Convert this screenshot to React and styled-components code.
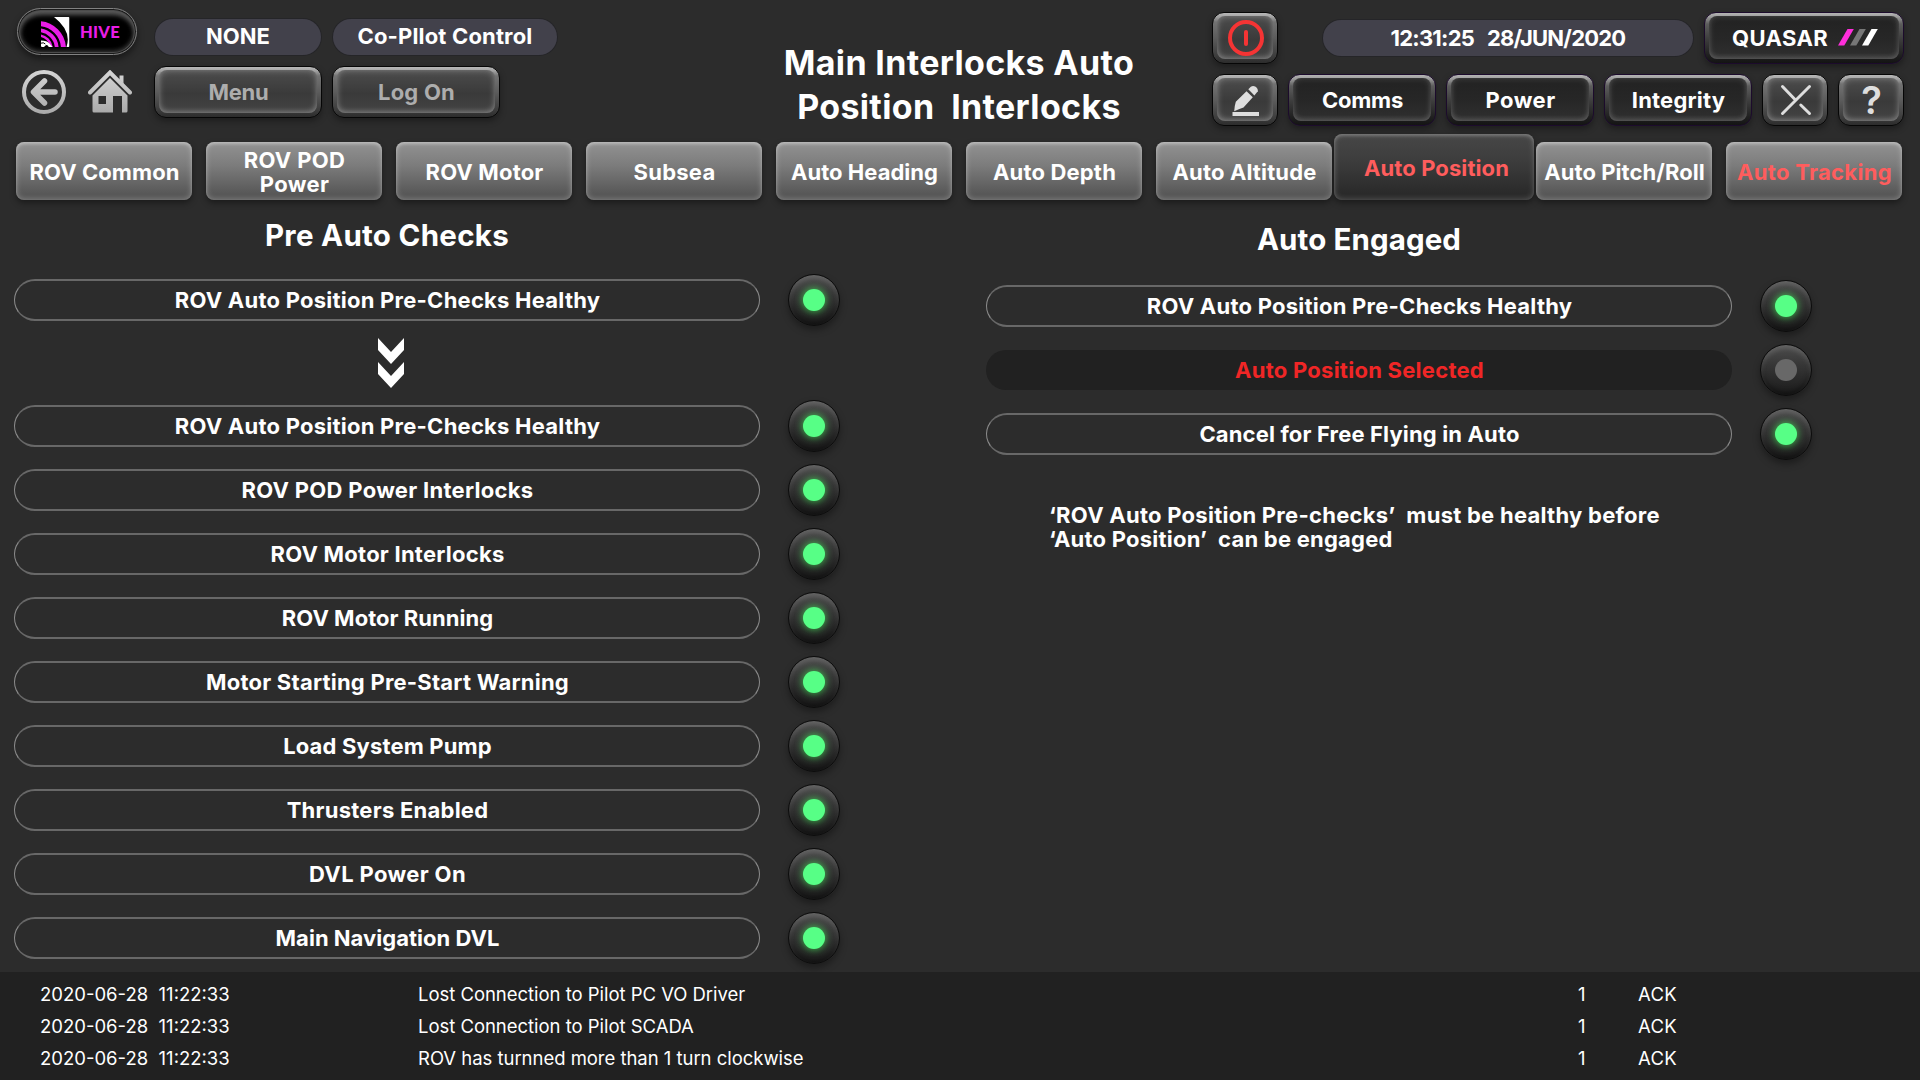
import React from 'react';
import styled, { createGlobalStyle, css } from 'styled-components';

const Global = createGlobalStyle`
  *, *::before, *::after { box-sizing: border-box; }
  body {
    margin: 0;
    background: #2c2c2c;
    color: #fff;
    font-family: Inter, "Liberation Sans", sans-serif;
    font-size: 22px;
    font-weight: 700;
    line-height: 24px;
  }
  svg { display: block; flex: none; }
`;

const Screen = styled.div`
  width: 1920px;
  height: 1080px;
  display: flex;
  flex-direction: column;
  overflow: hidden;
  background: #2c2c2c;
`;

const Label = styled.span`
  letter-spacing: ${p => p.$track || 0}px;
  word-spacing: ${p => p.$words || 0}px;
  white-space: pre;
  text-align: center;
`;

/* ---------- header ---------- */

const Header = styled.header`
  height: 134px;
  flex: none;
  display: flex;
`;

const HeaderLeft = styled.div`
  width: 704px;
  padding: 8px 0 0 17px;
  display: flex;
  flex-direction: column;
  gap: 11px;
`;

const HeaderRight = styled.div`
  padding-top: 12px;
  display: flex;
  flex-direction: column;
  gap: 10px;
`;

const Row = styled.div`
  display: flex;
  align-items: ${p => p.$align || 'center'};
  gap: ${p => p.$gap || 0}px;
`;

const Title = styled.h1`
  width: 508px;
  margin: 0;
  padding: 41px 0 0 2px;
  font-size: 34px;
  font-weight: 700;
  line-height: 44px;
  letter-spacing: 0.34px;
  text-align: center;
  white-space: pre;
`;

const HiveButton = styled.button`
  width: 120px;
  height: 47px;
  margin: 0 18px 0 0;
  padding: 0 0 0 23px;
  display: flex;
  align-items: center;
  gap: 10px;
  border: 1px solid #828282;
  border-radius: 24px;
  background: #000;
  box-shadow: inset 0 0 0 1px #1a1a1a, inset 0 0 0 2px #4c4c4c,
    inset 0 6px 5px #585858, inset 0 -2px 5px #333, inset 0 0 7px #777,
    0 4px 7px rgba(0, 0, 0, 0.45);
`;

const HiveName = styled.span`
  padding-top: 1px;
  font-family: Lato, sans-serif;
  font-size: 16.5px;
  font-weight: 900;
  letter-spacing: 0.3px;
  color: #e91de6;
`;

const Pill = styled.div`
  width: ${p => p.$w}px;
  height: 36px;
  margin: 0 ${p => p.$after || 0}px 0 ${p => p.$before || 0}px;
  padding-bottom: ${p => p.$lift || 0}px;
  display: flex;
  align-items: center;
  justify-content: center;
  border-radius: 18px;
  background: #42414b;
  box-shadow: 0 0 0 1px #252528;
`;

const NavIcons = styled.div`
  width: 137px;
  padding: 4px 0 0 5px;
  display: flex;
  gap: 22px;
`;

const Bevel = styled.button`
  width: ${p => p.$w}px;
  height: 52px;
  padding: 3px 4px 4px;
  display: flex;
  border: 1px solid #060606;
  border-radius: 12px;
  font: inherit;
  color: ${p => (p.$muted ? '#adadad' : '#fff')};
  background: linear-gradient(#b8b8b8 0, #a2a2a2 4px, #727272 9px, #5c5c5c 50%, #3c3c3c 86%, #2c2c2c 100%);
  box-shadow: 0 3px 6px rgba(0, 0, 0, 0.35);
  ${p => p.$dark && css`
    border-color: #1c0b2c;
    background: linear-gradient(#b4b4b4 0, #9a9a9a 4px, #5c5c5c 11px, #3f3f3f 50%, #202020 84%, #141414 100%);
  `}
`;

const Face = styled.span`
  flex: 1;
  padding-left: ${p => (p.$gap ? 2 : 1)}px;
  display: flex;
  align-items: center;
  justify-content: center;
  gap: ${p => p.$gap || 0}px;
  border-radius: 8px;
  background: ${p => (p.$dark
    ? 'linear-gradient(#222 0, #272727 55%, #303030 100%)'
    : 'linear-gradient(#4c4c4c 0, #3a3a3a 55%, #444 100%)')};
  box-shadow: inset 0 0 7px ${p => (p.$dark ? 'rgba(255,255,255,.17)' : 'rgba(255,255,255,.3)')},
    inset 0 -2px 5px rgba(255, 255, 255, 0.12);
`;

const Question = styled.span`
  font-size: 38px;
  font-weight: 600;
  color: #dedede;
`;

/* ---------- tabs ---------- */

const Tabs = styled.nav`
  height: 66px;
  flex: none;
  padding-left: 16px;
  display: flex;
  align-items: flex-end;
  gap: 14px;
`;

const Tab = styled.button`
  width: 176px;
  height: 58px;
  flex: none;
  padding: 1px 0 0 1px;
  display: flex;
  align-items: center;
  justify-content: center;
  border: 0;
  border-radius: 8px;
  font: inherit;
  color: ${p => (p.$alert ? '#ff5d5d' : '#fff')};
  background: linear-gradient(#929292 0, #7c7c7c 40%, #575757 90%);
  box-shadow: inset 0 0 6px rgba(255, 255, 255, 0.3), inset 0 2px 3px rgba(255, 255, 255, 0.25),
    0 3px 6px rgba(0, 0, 0, 0.4);
  ${p => p.$active && css`
    width: 200px;
    height: 66px;
    margin: 0 -12px;
    padding: 1px 0 0 5px;
    background: linear-gradient(#474747 0, #3d3d3d 40%, #2a2a2a 90%);
    box-shadow: inset 0 0 6px rgba(255, 255, 255, 0.25), inset 0 2px 3px rgba(255, 255, 255, 0.16),
      0 3px 6px rgba(0, 0, 0, 0.4);
  `}
`;

/* ---------- interlock lists ---------- */

const Main = styled.main`
  flex: 1;
  display: flex;
`;

const Section = styled.section`
  width: ${p => p.$w}px;
  padding: ${p => p.$top}px 0 0 ${p => p.$left}px;
  display: flex;
  flex-direction: column;
`;

const Heading = styled.h2`
  width: 746px;
  margin: 0 0 ${p => p.$gap}px;
  font-size: 29.5px;
  font-weight: 700;
  line-height: 35px;
  text-align: center;
`;

const List = styled.div`
  display: flex;
  flex-direction: column;
  gap: 12px;
`;

const CheckRow = styled.div`
  height: 52px;
  display: flex;
  align-items: center;
  gap: 28px;
`;

const CheckBox = styled.div`
  width: 746px;
  height: ${p => (p.$off ? 40 : 42)}px;
  padding-left: 1px;
  display: flex;
  align-items: center;
  justify-content: center;
  border: solid;
  border-width: ${p => (p.$off ? '0' : '2px 1px')};
  border-color: #686868 #8c8c8c;
  border-radius: 21px;
  background: ${p => (p.$off ? '#212121' : 'transparent')};
  color: ${p => (p.$off ? '#f02626' : '#fff')};
`;

const Lamp = styled.div`
  width: 52px;
  height: 52px;
  display: flex;
  align-items: center;
  justify-content: center;
  border: 1px solid #0c0c0c;
  border-radius: 50%;
  background: linear-gradient(#4d4d4d 0, #363636 40%, #1b1b1b 100%);
  box-shadow: inset 0 3px 5px rgba(255, 255, 255, 0.16), inset 0 -3px 5px rgba(0, 0, 0, 0.4),
    0 4px 7px rgba(0, 0, 0, 0.35);
`;

const Light = styled.div`
  width: 22px;
  height: 22px;
  border-radius: 50%;
  background: ${p => (p.$on ? '#57ff86' : '#686868')};
  box-shadow: ${p => (p.$on ? '0 0 7px 1px rgba(70, 225, 90, 0.7)' : 'none')};
`;

const ArrowSlot = styled.div`
  width: 746px;
  padding-left: 8px;
  display: flex;
  justify-content: center;
`;

const Note = styled.p`
  margin: 43px 0 0;
  padding-left: 63px;
  display: flex;
  flex-direction: column;
  align-items: flex-start;
`;

/* ---------- event log ---------- */

const Footer = styled.footer`
  height: 108px;
  flex: none;
  padding: 6px 0 0 40px;
  background: #212121;
`;

const Event = styled.div`
  display: grid;
  grid-template-columns: 378px 1160px 60px 1fr;
  font-size: 18.5px;
  font-weight: 400;
  line-height: 32px;
  white-space: pre;
`;

const Cell = styled.span`
  letter-spacing: ${p => p.$track || 0}px;
`;

/* ---------- drawings ---------- */

const HiveLogo = () => (
  <svg width="29" height="30" viewBox="0 0 29 30">
    <defs>
      <clipPath id="hiveBox"><rect width="28.5" height="30" rx="1" /></clipPath>
    </defs>
    <g clipPath="url(#hiveBox)">
      <path d="M13 0H28.5V30H25.5Q31 14 13 0Z" fill="#fff" />
      <g fill="none" stroke="#e91de6">
        <circle cx="-3" cy="32" r="25.5" strokeWidth="5" />
        <circle cx="-3" cy="32" r="18.8" strokeWidth="3.8" />
        <circle cx="-3" cy="32" r="13.6" strokeWidth="2.6" />
      </g>
      <path d="M0 23.5Q6 23.5 8.5 26.5L11.5 30H7.8Q6 26.5 4 29L3 30H0Z" fill="#fff" />
      <path d="M0 26.2Q2.5 25 4.3 27" fill="none" stroke="#000" strokeWidth="1" />
    </g>
  </svg>
);

const BackIcon = () => (
  <svg width="44" height="44" viewBox="0 0 44 44">
    <defs>
      <linearGradient id="steel" x1="0" y1="0" x2="0" y2="44" gradientUnits="userSpaceOnUse">
        <stop offset="0" stopColor="#d6d6d6" />
        <stop offset="1" stopColor="#a9a9a9" />
      </linearGradient>
    </defs>
    <g fill="none" stroke="url(#steel)">
      <circle cx="22" cy="22" r="20" strokeWidth="4" />
      <path d="M22.5 11L11.5 22L22.5 33M12 22L33 22.01" strokeWidth="5.5" strokeLinecap="round" strokeLinejoin="round" />
    </g>
  </svg>
);

const HomeIcon = () => (
  <svg width="44" height="43" viewBox="0 0 44 43">
    <path d="M2 22.5L22 2.5L42 22.5" fill="none" stroke="url(#steel)" strokeWidth="4" strokeLinecap="round" />
    <path d="M31.5 5.5H35.5V14L31.5 10Z" fill="url(#steel)" />
    <path
      d="M22 8L39.5 25.5V41Q39.5 42.5 38 42.5H34V26H25V42.5H6Q4.5 42.5 4.5 41V25.5ZM10.5 26V34H18V26Z"
      fill="url(#steel)" fillRule="evenodd"
    />
  </svg>
);

const PowerIcon = () => (
  <svg width="38" height="38" viewBox="0 0 38 38" fill="none" stroke="#f53434" strokeWidth="4">
    <circle cx="19" cy="19" r="16" />
    <path d="M19 13V25" strokeLinecap="round" />
  </svg>
);

const PencilIcon = () => (
  <svg width="28" height="32" viewBox="0 0 28 32" fill="#dedede">
    <path d="M14.5 7.3L20.8 13.3L11.5 23.5Q8 24.5 2.2 27.2Q2.5 22 3.8 17.8Z" />
    <path d="M16.3 5.3L18.8 2.8Q20.8 1.2 23.2 2.4Q26.3 4.5 25.8 7.2L22.4 11.4Z" />
    <rect x="0.5" y="28" width="26.5" height="4" />
  </svg>
);

const CrossIcon = () => (
  <svg width="32" height="32" viewBox="0 0 32 32" fill="none" stroke="#dedede" strokeWidth="3" strokeLinecap="round">
    <path d="M2.5 2.5L15 15.5M29.5 2.5L2.5 29.5M20.8 21L29.5 29.5" />
  </svg>
);

const Slashes = () => (
  <svg width="40" height="17" viewBox="0 0 40 17">
    <path d="M9.5 0H15.8L6.3 16.5H0Z" fill="#ff2edb" />
    <path d="M21.5 0H27.8L18.3 16.5H12Z" fill="#777" />
    <path d="M33.5 0H39.8L30.3 16.5H24Z" fill="#fff" />
  </svg>
);

const DownArrows = () => (
  <svg width="26" height="50" viewBox="0 0 26 50" fill="#fff">
    <path d="M0 0L13 14L26 0V12L13 26L0 12Z" />
    <path d="M0 24L13 38L26 24V36L13 50L0 36Z" />
  </svg>
);

/* ---------- data ---------- */

const TABS = [
  { text: 'ROV Common', track: 0.07 },
  { text: 'ROV POD\nPower', track: 0.35 },
  { text: 'ROV Motor', track: 0.17 },
  { text: 'Subsea', track: 0.27 },
  { text: 'Auto Heading', track: 0.03 },
  { text: 'Auto Depth', track: 0.17 },
  { text: 'Auto Altitude', track: 0.14 },
  { text: 'Auto Position', track: 0.1, alert: true, active: true },
  { text: 'Auto Pitch/Roll', track: 0.07 },
  { text: 'Auto Tracking', track: 0.32, alert: true },
];

const PRE_CHECKS = [
  { text: 'ROV Auto Position Pre-Checks Healthy', track: 0.24 },
  { text: 'ROV POD Power Interlocks', track: 0.29 },
  { text: 'ROV Motor Interlocks', track: 0.24 },
  { text: 'ROV Motor Running', track: 0.04 },
  { text: 'Motor Starting Pre-Start Warning', track: 0.22 },
  { text: 'Load System Pump', track: 0.16 },
  { text: 'Thrusters Enabled', track: 0.25 },
  { text: 'DVL Power On', track: 0.36 },
  { text: 'Main Navigation DVL', track: 0.02 },
];

const ENGAGED = [
  { text: 'ROV Auto Position Pre-Checks Healthy', track: 0.24 },
  { text: 'Auto Position Selected', track: 0.26, off: true },
  { text: 'Cancel for Free Flying in Auto', track: 0.15 },
];

const EVENTS = [
  'Lost Connection to Pilot PC VO Driver',
  'Lost Connection to Pilot SCADA',
  'ROV has turnned more than 1 turn clockwise',
];

const Check = ({ text, track, off }) => (
  <CheckRow>
    <CheckBox $off={off}><Label $track={track}>{text}</Label></CheckBox>
    <Lamp><Light $on={!off} /></Lamp>
  </CheckRow>
);

const Button = ({ w, dark, muted, gap, children }) => (
  <Bevel $w={w} $dark={dark} $muted={muted}>
    <Face $dark={dark} $gap={gap}>{children}</Face>
  </Bevel>
);

export default function App() {
  return (
    <Screen>
      <Global />
      <Header>
        <HeaderLeft>
          <Row $align="flex-end">
            <HiveButton><HiveLogo /><HiveName>HIVE</HiveName></HiveButton>
            <Pill $w={166} $after={12} $lift={3}><Label $track={0.04}>NONE</Label></Pill>
            <Pill $w={224} $lift={3}><Label $track={0.16}>Co-Pllot Control</Label></Pill>
          </Row>
          <Row $align="flex-start">
            <NavIcons><BackIcon /><HomeIcon /></NavIcons>
            <Row $gap={10}>
              <Button w={168} muted><Label $track={-0.25}>Menu</Label></Button>
              <Button w={168} muted><Label $track={0.22}>Log On</Label></Button>
            </Row>
          </Row>
        </HeaderLeft>
        <Title>{'Main Interlocks Auto\nPosition  Interlocks'}</Title>
        <HeaderRight>
          <Row>
            <Button w={66}><PowerIcon /></Button>
            <Pill $w={370} $before={45} $after={11}>
              <Label $track={-0.77} $words={2}>12:31:25  28/JUN/2020</Label>
            </Pill>
            <Button w={200} dark gap={10}><Label $track={0.36}>QUASAR</Label><Slashes /></Button>
          </Row>
          <Row $gap={10}>
            <Button w={66}><PencilIcon /></Button>
            <Button w={148} dark><Label $track={-0.25}>Comms</Label></Button>
            <Button w={148} dark><Label $track={0.5}>Power</Label></Button>
            <Button w={148} dark><Label $track={0.21}>Integrity</Label></Button>
            <Button w={66}><CrossIcon /></Button>
            <Button w={66}><Question>?</Question></Button>
          </Row>
        </HeaderRight>
      </Header>

      <Tabs>
        {TABS.map(t => (
          <Tab key={t.text} $active={t.active} $alert={t.alert}>
            <Label $track={t.track}>{t.text}</Label>
          </Tab>
        ))}
      </Tabs>

      <Main>
        <Section $w={973} $top={18} $left={14}>
          <Heading $gap={21}><Label $track={0.3}>Pre Auto Checks</Label></Heading>
          <List>
            <Check text="ROV Auto Position Pre-Checks Healthy" track={0.24} />
            <ArrowSlot><DownArrows /></ArrowSlot>
            {PRE_CHECKS.map(c => <Check key={c.text} {...c} />)}
          </List>
        </Section>
        <Section $w={947} $top={22} $left={13}>
          <Heading $gap={23}><Label $track={0.1}>Auto Engaged</Label></Heading>
          <List>
            {ENGAGED.map(c => <Check key={c.text} {...c} />)}
          </List>
          <Note>
            <Label $track={0.26}>‘ROV Auto Position Pre-checks’  must be healthy before</Label>
            <Label $track={0.23}>‘Auto Position’  can be engaged</Label>
          </Note>
        </Section>
      </Main>

      <Footer>
        {EVENTS.map(e => (
          <Event key={e}>
            <Cell>2020-06-28  11:22:33</Cell>
            <Cell $track={-0.03}>{e}</Cell>
            <Cell>1</Cell>
            <Cell $track={0.3}>ACK</Cell>
          </Event>
        ))}
      </Footer>
    </Screen>
  );
}
